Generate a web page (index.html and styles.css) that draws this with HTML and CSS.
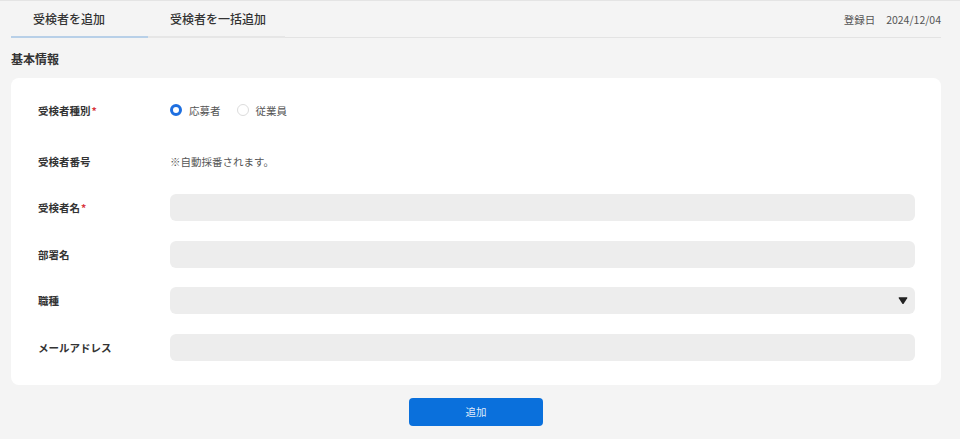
FILE: index.html
```html
<!DOCTYPE html>
<html lang="ja">
<head>
    <meta charset="UTF-8">
    <meta name="viewport" content="width=device-width, initial-scale=1.0">
    <title>受検者を追加</title>
    <link rel="stylesheet" href="styles.css">
</head>
<body>
    <div class="page">
        <div class="header">
            <div class="tabs">
                <div class="tab active">受検者を追加</div>
                <div class="tab">受検者を一括追加</div>
            </div>
            <div class="reg-date">
                <span>登録日</span>
                <span>2024/12/04</span>
            </div>
        </div>

        <h2 class="section-title">基本情報</h2>

        <div class="card">
            <div class="form-row radio-row">
                <div class="label">受検者種別<span class="required">*</span></div>
                <div class="radios">
                    <label class="radio checked"><span class="dot"></span>応募者</label>
                    <label class="radio"><span class="dot"></span>従業員</label>
                </div>
            </div>
            <div class="form-row">
                <div class="label">受検者番号</div>
                <div class="note">※自動採番されます。</div>
            </div>
            <div class="form-row">
                <div class="label">受検者名<span class="required">*</span></div>
                <div class="input"></div>
            </div>
            <div class="form-row">
                <div class="label">部署名</div>
                <div class="input"></div>
            </div>
            <div class="form-row">
                <div class="label">職種</div>
                <div class="input select">
                    <svg class="arrow" width="10" height="9" viewBox="0 0 10 9">
                        <path d="M1.2 1.2 H8.8 Q9.8 1.2 9.2 2.2 L5.8 7.6 Q5 8.6 4.2 7.6 L0.8 2.2 Q0.2 1.2 1.2 1.2 Z" fill="#222"/>
                    </svg>
                </div>
            </div>
            <div class="form-row">
                <div class="label">メールアドレス</div>
                <div class="input"></div>
            </div>
        </div>

        <div class="actions">
            <button class="submit-button">追加</button>
        </div>
    </div>
</body>
</html>
```

FILE: styles.css
```css
body {
    font-family: "Noto Sans CJK JP", "Noto Sans", sans-serif;
    background-color: #f4f4f4;
    margin: 0;
    padding: 0;
    color: #333;
    border-top: 1px solid #e4e4e4;
}
.page {
    padding: 0 19px 0 11px;
}
.header {
    display: flex;
    justify-content: space-between;
    align-items: center;
    height: 36px;
    border-bottom: 1px solid #e3e3e3;
}
.tabs {
    display: flex;
    height: 100%;
}
.tab {
    width: 137px;
    display: flex;
    align-items: center;
    padding-left: 22px;
    font-size: 12px;
    font-weight: 500;
    color: #333;
    box-sizing: border-box;
    border-bottom: 2px solid #e6e6e6;
    margin-bottom: -1px;
}
.tab.active {
    border-bottom-color: #b8d0e8;
}
.reg-date {
    display: flex;
    gap: 11px;
    font-size: 10.5px;
    color: #555;
}
.section-title {
    font-size: 12px;
    font-weight: 700;
    margin: 12px 0 10px;
    line-height: 18px;
    color: #333;
}
.card {
    background-color: #fff;
    border-radius: 8px;
    padding: 18px 26px 24px 27px;
    display: flex;
    flex-direction: column;
    gap: 19.5px;
}
.form-row {
    display: flex;
    align-items: center;
    min-height: 27px;
}
.radio-row {
    min-height: 28px;
    margin-bottom: 4px;
}
.label {
    width: 132px;
    flex-shrink: 0;
    font-size: 10.5px;
    font-weight: 700;
    color: #333;
}
.required {
    color: #d9363e;
    margin-left: 1px;
}
.radios {
    display: flex;
    gap: 16px;
}
.radio {
    display: flex;
    align-items: center;
    gap: 7px;
    font-size: 10.5px;
    color: #555;
}
.dot {
    width: 12px;
    height: 12px;
    box-sizing: border-box;
    border-radius: 50%;
    border: 1px solid #dcdcdc;
    background-color: #fff;
}
.radio.checked .dot {
    border: 3.5px solid #1e6fe0;
}
.note {
    font-size: 10.5px;
    color: #555;
}
.input {
    flex: 1;
    height: 27px;
    border-radius: 6px;
    background-color: #ededed;
}
.select {
    display: flex;
    align-items: center;
    justify-content: flex-end;
    padding-right: 7px;
}
.actions {
    display: flex;
    justify-content: center;
    padding: 13px 0;
}
.submit-button {
    width: 134px;
    height: 28px;
    border: none;
    border-radius: 4px;
    background-color: #0a70dc;
    color: #dfeafb;
    font-family: inherit;
    font-size: 10.5px;
    cursor: pointer;
}
```
